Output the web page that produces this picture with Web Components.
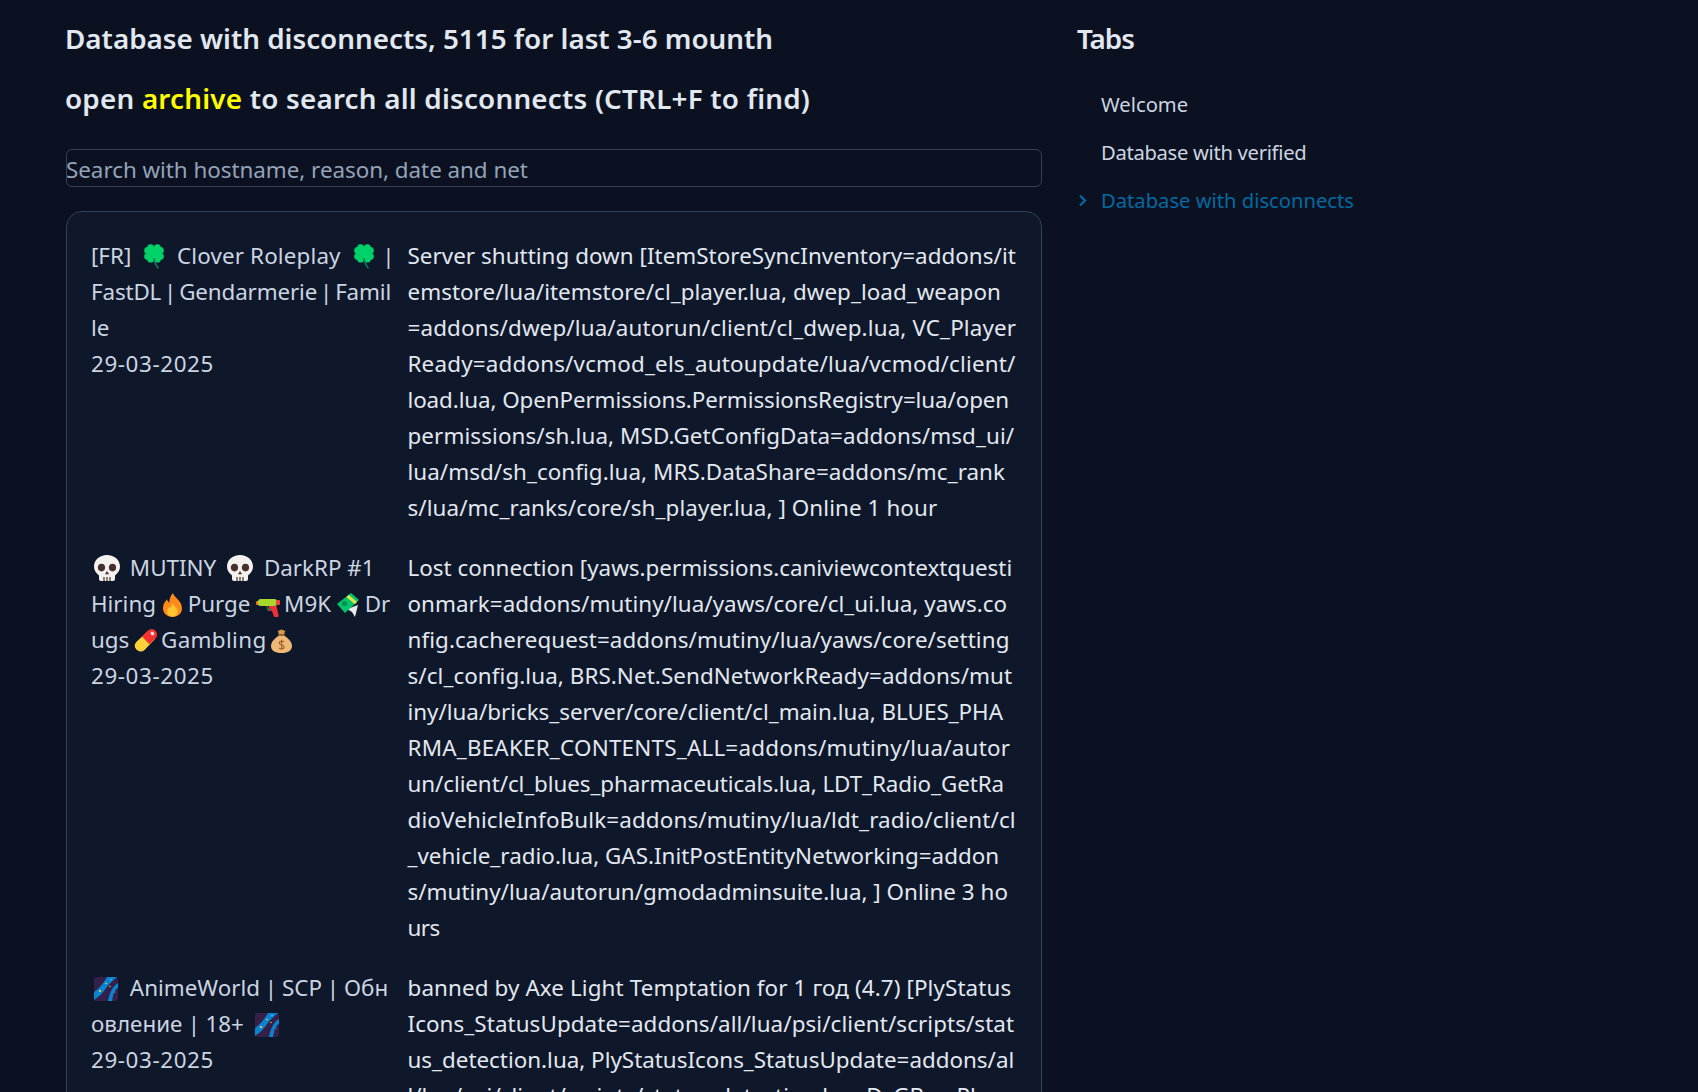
<!doctype html>
<html lang="en"><head><meta charset="utf-8"><title>Database with disconnects</title><style>
html,body{margin:0;height:1092px;overflow:hidden;background:#0b1120}
</style></head><body>
<doc-page>
  <page-title slot="main">Database with disconnects, 5115 for last 3-6 mounth</page-title>
  <page-title slot="main" style="letter-spacing:.22px">open <span style="color:#ff0">archive</span> to search all disconnects (CTRL+F to find)</page-title>
  <search-box slot="main" placeholder="Search with hostname, reason, date and net"></search-box>
  <disconnect-card slot="main">
    <disconnect-row>
      <span slot="server">[FR] <emoji-icon name="clover" ml="7" mr="7"></emoji-icon> <span style="letter-spacing:.15px">Clover Roleplay</span> <emoji-icon name="clover" ml="7" mr="3"></emoji-icon> |<br><span style="letter-spacing:-.15px;word-spacing:-2.75px">FastDL | Gendarmerie | Famil</span><br>le<br><span style="letter-spacing:.6px">29-03-2025</span></span>
      <span style="letter-spacing:.04px">Server shutting down [ItemStoreSyncInventory=addons/it</span><br><span style="letter-spacing:.04px">emstore/lua/itemstore/cl_player.lua, dwep_load_weapon</span><br><span style="letter-spacing:.14px">=addons/dwep/lua/autorun/client/cl_dwep.lua, VC_Player</span><br><span style="letter-spacing:.19px">Ready=addons/vcmod_els_autoupdate/lua/vcmod/client/</span><br><span style="letter-spacing:-.1px">load.lua, OpenPermissions.PermissionsRegistry=lua/open</span><br><span style="letter-spacing:.1px">permissions/sh.lua, MSD.GetConfigData=addons/msd_ui/</span><br><span style="letter-spacing:.06px">lua/msd/sh_config.lua, MRS.DataShare=addons/mc_rank</span><br><span style="letter-spacing:.09px">s/lua/mc_ranks/core/sh_player.lua, ] Online 1 hour</span>
    </disconnect-row>
    <disconnect-row>
      <span slot="server"><emoji-icon name="skull" ml="3" mr="4"></emoji-icon> MUTINY <emoji-icon name="skull" ml="5" mr="5"></emoji-icon> DarkRP #1<br>Hiring <emoji-icon name="fire" ml="1" mr="0"></emoji-icon> Purge <emoji-icon name="gun" ml="0" mr="-2"></emoji-icon> M9K <emoji-icon name="money" ml="0" mr="0"></emoji-icon> Dr<br>ugs <emoji-icon name="pill" ml="-2" mr="-3"></emoji-icon> <span style="letter-spacing:.35px">Gambling</span> <emoji-icon name="bag" ml="-1" mr="0"></emoji-icon><br><span style="letter-spacing:.6px">29-03-2025</span></span>
      Lost connection [yaws.permissions.caniviewcontextquesti<br><span style="letter-spacing:.04px">onmark=addons/mutiny/lua/yaws/core/cl_ui.lua, yaws.co</span><br><span style="letter-spacing:.08px">nfig.cacherequest=addons/mutiny/lua/yaws/core/setting</span><br><span style="letter-spacing:.08px">s/cl_config.lua, BRS.Net.SendNetworkReady=addons/mut</span><br><span style="letter-spacing:-.02px">iny/lua/bricks_server/core/client/cl_main.lua, BLUES_PHA</span><br><span style="letter-spacing:.23px">RMA_BEAKER_CONTENTS_ALL=addons/mutiny/lua/autor</span><br><span style="letter-spacing:-.08px">un/client/cl_blues_pharmaceuticals.lua, LDT_Radio_GetRa</span><br><span style="letter-spacing:.14px">dioVehicleInfoBulk=addons/mutiny/lua/ldt_radio/client/cl</span><br><span style="letter-spacing:.02px">_vehicle_radio.lua, GAS.InitPostEntityNetworking=addon</span><br><span style="letter-spacing:.02px">s/mutiny/lua/autorun/gmodadminsuite.lua, ] Online 3 ho</span><br><span style="letter-spacing:-.5px">urs</span>
    </disconnect-row>
    <disconnect-row>
      <span slot="server"><emoji-icon name="galaxy" ml="3" mr="6"></emoji-icon> <span style="word-spacing:-1px">AnimeWorld | SCP | Обн</span><br><span style="word-spacing:-.5px">овление | 18+</span> <emoji-icon name="galaxy" ml="5" mr="0"></emoji-icon><br><span style="letter-spacing:.6px">29-03-2025</span></span>
      <span style="letter-spacing:.11px">banned by Axe Light Temptation for 1 год (4.7) [PlyStatus</span><br><span style="letter-spacing:.08px">Icons_StatusUpdate=addons/all/lua/psi/client/scripts/stat</span><br>us_detection.lua, PlyStatusIcons_StatusUpdate=addons/al<br>l/lua/psi/client/scripts/status_detection.lua, DzGBan.Pla
    </disconnect-row>
  </disconnect-card>
  <side-nav slot="side" heading="Tabs">
    <nav-item>Welcome</nav-item>
    <nav-item style="letter-spacing:-.3px">Database with verified</nav-item>
    <nav-item active>Database with disconnects</nav-item>
  </side-nav>
</doc-page>
<script>
const FONT='"Noto Sans","Open Sans",sans-serif';
class DocPage extends HTMLElement{constructor(){super();this.attachShadow({mode:'open'}).innerHTML=`<style>
:host{display:grid;grid-template-columns:977px 1fr;column-gap:35px;padding:7.5px 0 0 65px;box-sizing:border-box;height:1092px;overflow:hidden;font-family:${FONT};color:#cbd5e1;font-size:22.4px}
main,aside{min-width:0}
</style><main><slot name="main"></slot></main><aside><slot name="side"></slot></aside>`}}
class PageTitle extends HTMLElement{constructor(){super();this.attachShadow({mode:'open'}).innerHTML=`<style>
:host{display:block;font-size:27.8px;font-weight:600;line-height:60px;color:#e2e8f0;white-space:nowrap}
</style><slot></slot>`}}
class SearchBox extends HTMLElement{constructor(){super();this.attachShadow({mode:'open'}).innerHTML=`<style>
:host{display:block;margin:21.5px 0 0 1px}
input{display:block;box-sizing:border-box;width:100%;height:38px;padding:2px 0 0;background:transparent;border:1px solid #334155;border-radius:6px;font:inherit;letter-spacing:-.03px;text-indent:-1px;color:#94a3b8;outline:none}
input::placeholder{color:#94a3b8;opacity:1}
</style><input>`;}
connectedCallback(){this.shadowRoot.querySelector('input').placeholder=this.getAttribute('placeholder')||''}}
class DisconnectCard extends HTMLElement{constructor(){super();this.attachShadow({mode:'open'}).innerHTML=`<style>
:host{display:flex;flex-direction:column;gap:24px;margin:24px 0 0 1px;border:1px solid #334155;border-radius:16px;background:#0f172a;padding:26px 24px 25px}
</style><slot></slot>`}}
class DisconnectRow extends HTMLElement{constructor(){super();this.attachShadow({mode:'open'}).innerHTML=`<style>
:host{display:grid;grid-template-columns:316.5px 1fr;line-height:36px;white-space:nowrap}
.s{color:#cbd5e1}.r{color:#e2e8f0}
</style><div class="s"><slot name="server"></slot></div><div class="r"><slot></slot></div>`}}
const ICONS={
clover:[20,25,`<g fill="#00d26a"><circle cx="6.6" cy="3.6" r="3.4"/><circle cx="13.4" cy="3.6" r="3.4"/><circle cx="16.4" cy="6.4" r="3.4"/><circle cx="16.4" cy="12.4" r="3.4"/><circle cx="13.4" cy="15.2" r="3.4"/><circle cx="6.6" cy="15.2" r="3.4"/><circle cx="3.6" cy="12.4" r="3.4"/><circle cx="3.6" cy="6.4" r="3.4"/><rect x="4" y="3" width="12" height="13"/></g><path d="M10 14Q10.5 20 14.5 24.4" fill="none" stroke="#0a7f55" stroke-width="1.6"/>`],
skull:[26,26,`<path fill="#f5f1ef" d="M13 0C5.6 0 0 5 0 11.6c0 3.8 1.9 6.8 5 8.8V24a2 2 0 0 0 2 2h12a2 2 0 0 0 2-2v-3.6c3.1-2 5-5 5-8.8C26 5 20.4 0 13 0z"/><ellipse cx="7.5" cy="12.6" rx="3.6" ry="3.8" fill="#46302f"/><ellipse cx="18.5" cy="12.6" rx="3.6" ry="3.8" fill="#46302f"/><path d="M13 16l2 3.2h-4z" fill="#46302f"/><path d="M10 22v4M13 22v4M16 22v4" stroke="#46302f" stroke-width="1.2"/>`],
fire:[19,24,`<path fill="#ff8a1c" d="M10 0c1 4.5 9 7.5 9 15 0 5.500-4 9-9.500 9S0 20.500 0 15c0-4.200 2.400-6.800 4.100-8.800.5 1.800 1.100 2.800 2.300 3.400C6.200 6 7.600 2.500 10 0z"/><path fill="#ffc531" d="M9.700 10.500c.8 2.500 5 4 5 8 0 3.200-2.300 5-5.200 5s-5.200-1.800-5.200-5c0-2.600 1.500-3.600 2.500-5 .3 1 .7 1.500 1.200 1.800 0-1.600.6-3.400 1.700-4.800z"/>`],
gun:[24,18,`<rect x="0" y="2" width="3" height="4" rx="1" fill="#f0702c"/><rect x="2" y="0" width="19" height="7" rx="2.500" fill="#a8d82c"/><rect x="20" y="1" width="4" height="5" rx="1.200" fill="#f0443a"/><path d="M13 7h7.500l2 9.200a1.400 1.400 0 0 1-1.400 1.800h-2a1.400 1.400 0 0 1-1.400-1L16 12h-4z" fill="#ef2f38"/><path d="M11 7l.6 3.500h4" fill="none" stroke="#1c7a42" stroke-width="1.300"/>`],
money:[22,24,`<path d="M10 16l11-4-3 12-3-5z" fill="#e6e8ec"/><path d="M0 11 14 0l8 7-14 13z" fill="#00c56c"/><path d="M10.500 3 19 10" stroke="#e6e34a" stroke-width="3"/><circle cx="7.500" cy="10.500" r="2.600" fill="#0a8f4f"/>`],
pill:[25,25,`<path d="M14.500 3.500L22 11 11.500 22a5.300 5.300 0 0 1-7.800-.2L3.200 21.300a5.300 5.300 0 0 1 .1-7.400z" fill="#ffd23c"/><path d="M9 8.500l7.500 7.800 6-6a5.400 5.400 0 0 0-7.600-7.700z" fill="#f8312f"/><ellipse cx="19.400" cy="5.500" rx="2" ry="1.600" fill="#ffe6e2" transform="rotate(40 19.400 5.500)"/>`],
bag:[21,24,`<path d="M6.500 1.500c1.500 1 2.500-1 4-1s2.500 2 4 1l-2 5h-4z" fill="#d49a4c"/><rect x="7" y="5" width="7" height="2" rx="1" fill="#9b6230"/><path d="M7.500 7C4 9 0 12.800 0 17c0 4.600 4 7 10.500 7S21 21.600 21 17c0-4.200-4-8-7.500-10z" fill="#eeb977"/><path d="M13 12.800c-.8-1-4.800-1.200-4.800 1.200 0 2.500 5 1.500 5 4 0 2.300-4 2.100-5.200 1M10.600 10.800v10" fill="none" stroke="#a2602b" stroke-width="1.200"/>`],
galaxy:[24,24,`<rect width="24" height="24" rx="3" fill="#35204a"/><path d="M0 15C6 11 10 5 13 0H23C18 4 13 9 10 14 7 18 3 21 0 23z" fill="#0a83d1"/><path d="M24 6C19 9 16 14 14 24H18C19 17 21 12 24 11z" fill="#0a83d1"/><g fill="#ffd83d"><circle cx="6" cy="14" r="1.100"/><circle cx="12" cy="6.500" r=".8"/><circle cx="16" cy="9.500" r=".7"/></g><g fill="#6fc0f0"><circle cx="17" cy="2.500" r=".8"/><circle cx="21" cy="15" r=".6"/></g>`]
};
class EmojiIcon extends HTMLElement{constructor(){super();this.attachShadow({mode:'open'})}
connectedCallback(){const [w,h,body]=ICONS[this.getAttribute('name')];const ml=+this.getAttribute('ml')||0,mr=+this.getAttribute('mr')||0;
this.shadowRoot.innerHTML=`<style>:host{display:inline-block;width:${w}px;height:${h}px;margin:0 ${mr}px 0 ${ml}px;vertical-align:-5px;line-height:0}svg{display:block}</style><svg width="${w}" height="${h}" viewBox="0 0 ${w} ${h}" aria-hidden="true">${body}</svg>`}}
class SideNav extends HTMLElement{constructor(){super();this.attachShadow({mode:'open'})}
connectedCallback(){this.shadowRoot.innerHTML=`<style>:host{display:block}
.h{font-size:27.8px;font-weight:600;line-height:60px;color:#e2e8f0;letter-spacing:-1px}
.l{display:flex;flex-direction:column;margin-top:12.5px}
</style><div class="h">${this.getAttribute('heading')||''}</div><div class="l"><slot></slot></div>`}}
class NavItem extends HTMLElement{constructor(){super();this.attachShadow({mode:'open'})}
connectedCallback(){const a=this.hasAttribute('active');this.shadowRoot.innerHTML=`<style>:host{display:flex;align-items:center;height:48px;font-size:20.2px;color:${a?'#0369a1':'#cbd5e1'}}
.c{width:24px;flex:none;display:flex}</style><span class="c">${a?'<svg width="11" height="13" viewBox="0 0 11 13" fill="none" stroke="#0369a1" stroke-width="2.300"><path d="M3 1.500 8 6.500l-5 5"/></svg>':''}</span><slot></slot>`}}
for(const [n,c] of Object.entries({'doc-page':DocPage,'page-title':PageTitle,'search-box':SearchBox,'disconnect-card':DisconnectCard,'disconnect-row':DisconnectRow,'emoji-icon':EmojiIcon,'side-nav':SideNav,'nav-item':NavItem}))customElements.define(n,c);
</script>
</body></html>
